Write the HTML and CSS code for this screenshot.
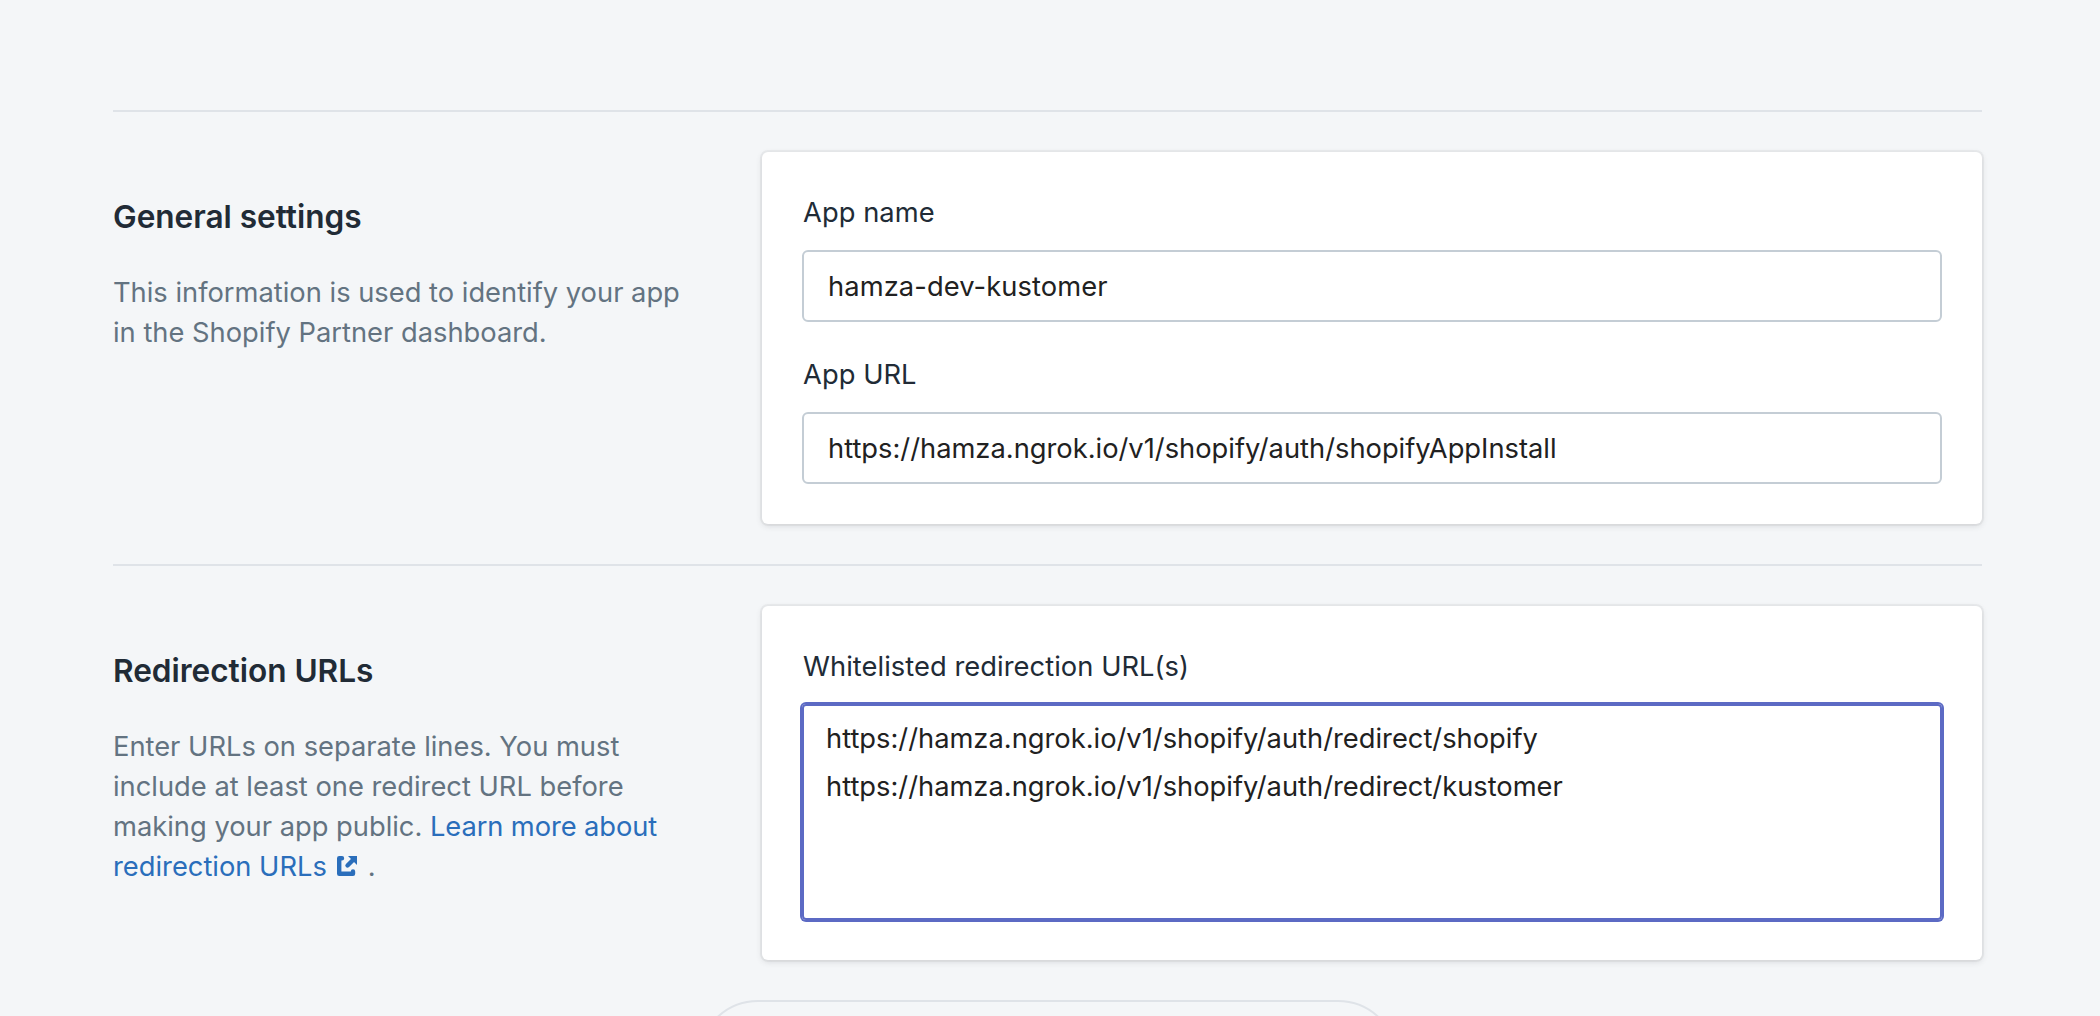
FILE: index.html
```html
<!DOCTYPE html>
<html lang="en">
<head>
<meta charset="utf-8">
<title>App setup</title>
<link rel="stylesheet" href="styles.css">
</head>
<body>
<main class="page">
  <section class="section">
    <div class="section-info">
      <h2 class="section-title">General settings</h2>
      <p class="section-text">This information is used to identify your app<br>in the Shopify Partner dashboard.</p>
    </div>
    <div class="card">
      <div class="label">App name</div>
      <div class="input">hamza-dev-kustomer</div>
      <div class="label label-next">App URL</div>
      <div class="input input-url">https://hamza.ngrok.io/v1/shopify/auth/shopifyAppInstall</div>
    </div>
  </section>
  <section class="section">
    <div class="section-info">
      <h2 class="section-title">Redirection URLs</h2>
      <p class="section-text">Enter URLs on separate lines. You must<br>include at least one redirect URL before<br>making your app public. <a class="link"><span class="link-start">Learn more about</span><br>redirection URLs <svg class="external" viewBox="0 0 20 20"><path d="M5 2.200H2.200V17.800H16V15.500" stroke-linecap="round" stroke-linejoin="round"/><path d="M10.500 9.500L16 4" stroke-linecap="round"/><path class="head" d="M11 0H20V9Z"/></svg></a> .</p>
    </div>
    <div class="card">
      <div class="label">Whitelisted redirection URL(s)</div>
      <div class="textarea">https://hamza.ngrok.io/v1/shopify/auth/redirect/shopify<br>https://hamza.ngrok.io/v1/shopify/auth/redirect/kustomer</div>
    </div>
  </section>
  <div class="footer-help"></div>
</main>
</body>
</html>
```
FILE: styles.css
```css
* { box-sizing: border-box; }
html { overflow: hidden; }
body {
  margin: 0;
  height: 1016px;
  overflow: hidden;
  background: #f4f6f8;
  color: #212b36;
  font-family: Inter, "Liberation Sans", sans-serif;
  font-size: 27.3px;
  line-height: 40px;
}
.page { height: 1016px; overflow: hidden; padding: 110px 118px 0 113px; }
.section {
  display: grid;
  grid-template-columns: 1fr 1220px;
  border-top: 2px solid #dfe3e8;
  padding: 40px 0;
}
.section-info { padding-top: 41px; }
.section-title { margin: 0; font-size: 31.6px; font-weight: 600; line-height: 48px; letter-spacing: -.03px; }
.section-text { margin: 32px 0 0; color: #637381; white-space: nowrap; }
.link { color: #2a6ebb; }
.link-start { letter-spacing: -.1px; }
.external { width: 20px; height: 20px; margin: 0 3px 0 2.5px; fill: none; stroke: currentColor; stroke-width: 4.4; }
.external .head { fill: currentColor; stroke: none; }
.card {
  background: #fff;
  border-radius: 6px;
  padding: 41px 40px 40px;
  box-shadow: 0 0 0 2px rgba(63, 63, 68, .05), 0 2px 6px rgba(63, 63, 68, .15);
}
.label { margin-bottom: 17px; padding-left: 1px; letter-spacing: .05px; }
.label-next { margin-top: 33px; }
.input, .textarea {
  height: 72px;
  border: 2px solid #c4cdd5;
  border-radius: 6px;
  padding: 15px 24px 13px;
  color: #212121;
  white-space: nowrap;
}
.input { letter-spacing: .1px; }
.input-url { letter-spacing: 0; }
.textarea {
  height: 216px;
  padding: 9px 22px;
  line-height: 48px;
  border-color: #5c6ac4;
  border-radius: 4px;
  box-shadow: 0 0 0 2px #5c6ac4;
}
.footer-help { width: 700px; height: 120px; margin: 0 auto; border: 2px solid #dfe3e8; border-radius: 60px; }
```
